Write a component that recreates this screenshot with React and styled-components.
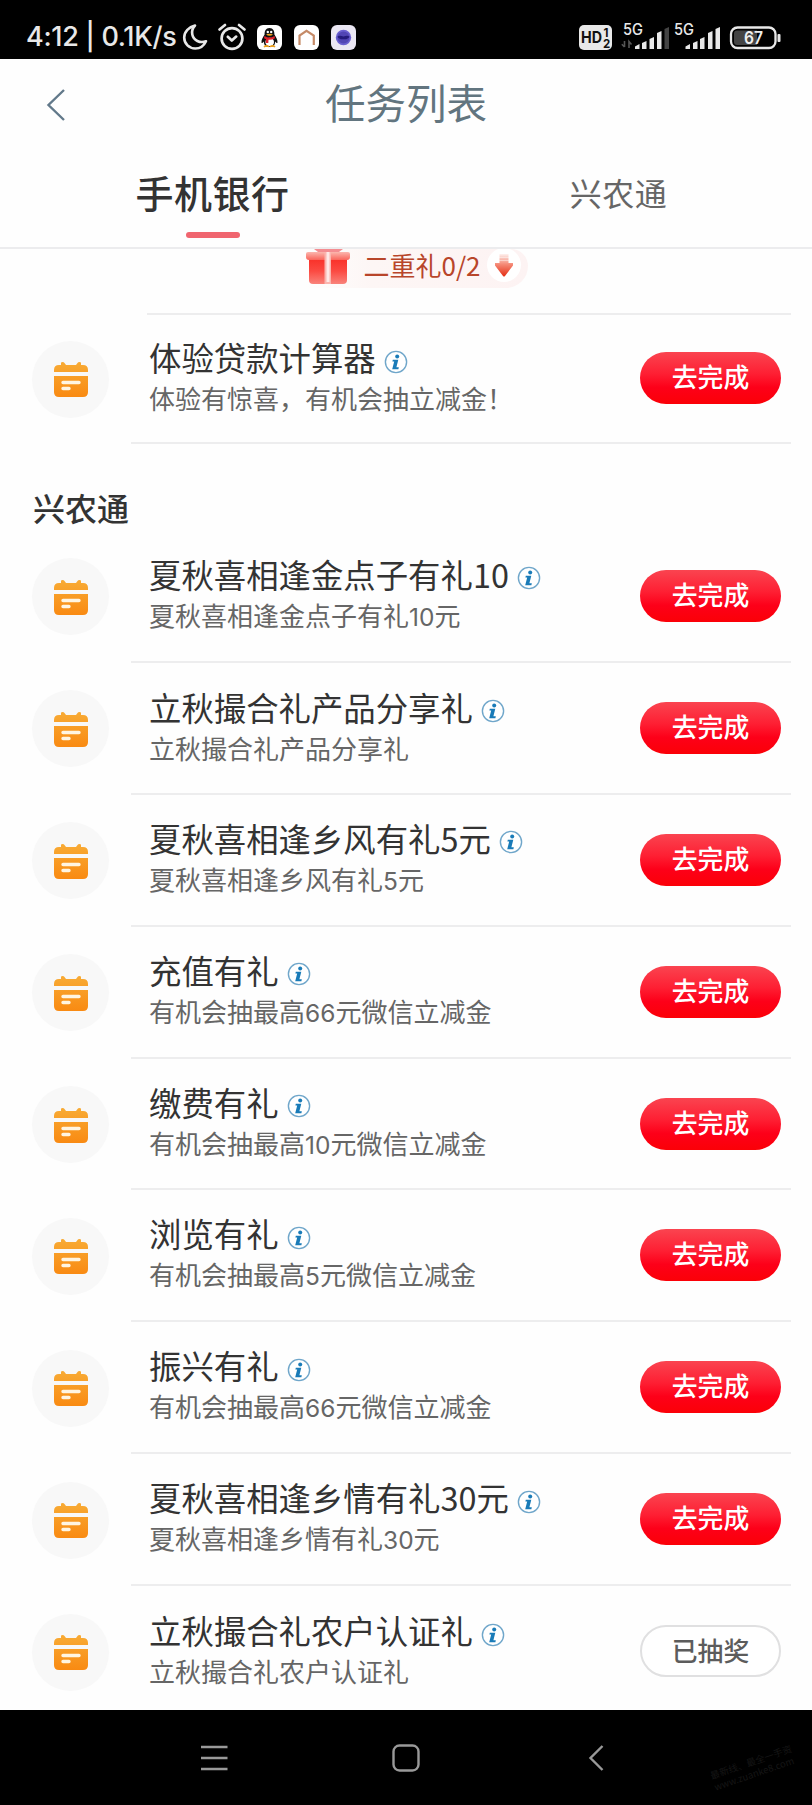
import styled, { createGlobalStyle } from 'styled-components';

const GlobalStyle = createGlobalStyle`
  * {
    box-sizing: border-box;
  }

  body {
    margin: 0;
    background: #fff;
    font-family: 'Noto Sans CJK SC', 'Noto Sans', sans-serif;
  }
`;

const Screen = styled.div`
  width: 812px;
  height: 1805px;
  display: flex;
  flex-direction: column;
  background: #fefefe;
  overflow: hidden;
`;

/* Status bar */
const StatusBar = styled.div`
  height: 59px;
  flex: none;
  display: flex;
  justify-content: space-between;
  padding: 16px 30px 0 26px;
  background: #000;
  color: #e8e8e8;
`;

const StatusSide = styled.div`
  display: flex;
  align-items: center;
  height: 42px;
`;

const Clock = styled.span`
  width: 156px;
  font-family: Inter, sans-serif;
  font-size: 27px;
  font-weight: 500;
  line-height: 42px;
  white-space: nowrap;
  letter-spacing: -0.3px;
`;

const StatusIcons = styled.div`
  display: flex;
  align-items: center;
  gap: 12px;

  svg:first-child {
    margin-right: -3px;
  }

  svg:nth-child(2) {
    margin-right: -2px;
  }
`;

/* Page header */
const Header = styled.header`
  height: 91px;
  flex: none;
  display: grid;
  grid-template-columns: 112px 1fr 112px;
  align-items: center;
`;

const BackButton = styled.button`
  height: 40px;
  margin-top: 3px;
  padding: 0 0 0 44px;
  border: 0;
  background: none;
  text-align: left;
`;

const PageTitle = styled.h1`
  margin: 0 0 6px;
  color: #62757f;
  font-size: 40.5px;
  font-weight: 400;
  line-height: 60px;
  text-align: center;
`;

const Tabs = styled.nav`
  height: 99px;
  flex: none;
  display: flex;
  border-bottom: 2px solid #ececee;
`;

const Tab = styled.div`
  flex: 1;
  display: flex;
  flex-direction: column;
  align-items: center;
  padding: 12px 0 0 ${props => (props.$active ? '19px' : '0')};
  color: ${props => (props.$active ? '#333' : '#666')};
  font-size: ${props => (props.$active ? '38px' : '32px')};
  font-weight: ${props => (props.$active ? 500 : 400)};
  line-height: 60px;
  letter-spacing: 0.5px;

  &:last-child {
    padding-right: 0;
    padding-left: 19px;
  }
`;

const TabMark = styled.i`
  width: 54px;
  height: 6px;
  margin-top: 10px;
  border-radius: 3px;
  background: #f0656f;
`;

/* Everything between the tabs and the system navigation, cut at both ends */
const Content = styled.main`
  flex: 1;
  min-height: 0;
  display: flex;
  flex-direction: column;
  overflow: hidden;
`;

/* Gift progress strip */
const GiftStrip = styled.div`
  height: 64.5px;
  flex: none;
  display: flex;
  justify-content: center;
  padding-left: 20px;
`;

const GiftPill = styled.div`
  width: 223px;
  height: 39px;
  display: flex;
  align-items: center;
  border-radius: 0 17px 22px 0;
  background: linear-gradient(90deg, #fefefe, #fdf6f5 30%, #fdf3f3);
  color: #b8452a;
  font-size: 26px;
`;

const GiftText = styled.span`
  width: 120px;
  margin: -8px 0 0 13px;
  line-height: 30px;
  white-space: nowrap;
`;

const ArrowDisc = styled.span`
  width: 34px;
  height: 34px;
  display: grid;
  place-items: center;
  margin: -7px 0 0 3px;
  border-radius: 50%;
  background: #fff;
`;

/* Task list */
const Row = styled.div`
  height: ${props => props.$height || '131.9px'};
  flex: none;
  display: flex;
  align-items: center;
  padding: 0 31px 0 32px;
`;

const Divider = styled.div`
  height: 2px;
  flex: none;
  margin: -1px 21px -1px ${props => props.$inset || '131px'};
  background: #ededee;
`;

const IconDisc = styled.div`
  width: 77px;
  height: 77px;
  flex: none;
  display: grid;
  place-items: center;
  margin-top: 2px;
  padding-top: 1px;
  border-radius: 50%;
  background: #f8f8f8;
`;

const TaskText = styled.div`
  flex: 1;
  margin-top: -5px;
  padding-left: 40px;
  white-space: nowrap;
`;

const TaskTitle = styled.div`
  display: flex;
  align-items: center;
  gap: 8px;
  color: #333;
  font-size: 32.4px;
  line-height: 44px;

  svg {
    margin-top: 9px;
  }
`;

const TaskNote = styled.div`
  margin-top: 1px;
  color: #666;
  font-size: 26px;
  line-height: 36px;
`;

const Digits = styled.span`
  font-family: Inter, sans-serif;
  font-size: 24.5px;
`;

const ActionButton = styled.button`
  width: 141px;
  height: 52px;
  flex: none;
  padding: 0 0 4px;
  border: ${props => (props.$done ? '2px solid #e0e0e1' : '0')};
  border-radius: 26px;
  background: ${props =>
    props.$done ? '#fff' : 'linear-gradient(180deg, #fa4450 0%, #fe1f33 42%, #fd0019 68%, #fb0007 100%)'};
  color: ${props => (props.$done ? '#5c5c5c' : '#fff')};
  font-family: inherit;
  font-size: 25.8px;
  font-weight: 500;
  line-height: 46px;
`;

const SectionTitle = styled.h2`
  height: 87.5px;
  flex: none;
  margin: 0;
  padding: 42px 0 0 33px;
  color: #333;
  font-size: 32px;
  font-weight: 500;
  line-height: 44px;
`;

/* System navigation */
const NavBar = styled.footer`
  height: 95px;
  flex: none;
  display: grid;
  grid-template-columns: 310px 191px 189px 122px;
  align-items: center;
  background: #000;
`;

const NavKey = styled.span`
  display: flex;
  justify-content: ${props => props.$align || 'center'};
  padding-left: ${props => props.$indent || '0'};
`;

const Watermark = styled.div`
  width: 88px;
  margin: 18px 0 0 20px;
  color: #151515;
  font-size: 9.5px;
  line-height: 12px;
  white-space: nowrap;
  transform: rotate(-19deg);
`;

const MoonIcon = () => (
  <svg width="26" height="28" viewBox="0 0 26 28">
    <path
      d="M13 2.5C7 4 2.2 8.5 2.2 14.5C2.2 21 7.2 25.5 13.3 25.5C18 25.5 22 22.5 24 18.2C18 20.5 11.5 17.5 10.3 11.5C9.6 8.2 10.8 4.8 13 2.5Z"
      fill="none"
      stroke="#e8e8e8"
      strokeWidth="2.6"
      strokeLinejoin="round"
    />
  </svg>
);

const AlarmIcon = () => (
  <svg width="30" height="28" viewBox="0 0 30 28">
    <g fill="none" stroke="#e8e8e8" strokeWidth="2.7" strokeLinecap="round" strokeLinejoin="round">
      <circle cx="15" cy="15.5" r="10.4" />
      <path d="M2.5 6.5L8 2M27.5 6.5L22 2M10.8 13.8L14.8 17.5L19.2 13.6" />
    </g>
  </svg>
);

const PenguinIcon = () => (
  <svg width="25" height="25" viewBox="0 0 25 25">
    <rect width="25" height="25" rx="6" fill="#fff" />
    <path
      d="M12.5 3C8.8 3 7.5 6 7.6 9.5C6 12 4.2 15 4.5 17.5C4.8 18.8 6 17.5 6.8 16.5C7 21 9.5 22 12.5 22S18 21 18.2 16.5C19 17.5 20.2 18.8 20.5 17.5C20.8 15 19 12 17.4 9.5C17.5 6 16.2 3 12.5 3Z"
      fill="#111"
    />
    <ellipse cx="12.7" cy="17" rx="4.3" ry="4.3" fill="#fff" />
    <circle cx="10.8" cy="7" r="1.2" fill="#fff" />
    <circle cx="14.2" cy="7" r="1.2" fill="#fff" />
    <path d="M9 9.5Q12.5 8 16 9.5Q12.5 12 9 9.5Z" fill="#f3a51c" />
    <path d="M7.5 11Q12.5 14 17.5 11L18 13.2Q15 15 11.5 14.7L11.3 18H8.8L9 14.2L7 13.3Z" fill="#e0202b" />
    <path d="M7 22Q9 20 12 21.6M13 21.6Q16 20 18 22" fill="none" stroke="#efa119" strokeWidth="1.5" />
  </svg>
);

const HomeAppIcon = () => (
  <svg width="25" height="25" viewBox="0 0 25 25">
    <rect width="25" height="25" rx="6" fill="#fff" />
    <path d="M5.5 20V10.5L12.5 5.8L19.8 10.5V20" fill="none" stroke="#c58a67" strokeWidth="2.2" />
  </svg>
);

const OrbAppIcon = () => (
  <svg width="25" height="25" viewBox="0 0 25 25">
    <rect width="25" height="25" rx="6" fill="#ebe7f3" />
    <circle cx="12.5" cy="12.5" r="7.7" fill="#6a5fd0" />
    <circle cx="12.5" cy="12.5" r="6" fill="#5145b4" />
    <path d="M6.5 11.5Q9 10.2 12.5 11.6Q16 10.2 18.5 11.5Q17.5 14.5 12.5 14.3Q7.5 14.5 6.5 11.5Z" fill="#251b7c" />
  </svg>
);

const SignalIcons = () => (
  <svg width="204" height="38" viewBox="0 -4 204 38">
    <rect x="1" y="3" width="33" height="25" rx="5" fill="#e8e8e8" />
    <g fontFamily="Inter, sans-serif" fontWeight="700" fill="#111">
      <text x="3" y="20.5" fontSize="15.5" textLength="21" lengthAdjust="spacingAndGlyphs">HD</text>
      <text x="25.5" y="14.5" fontSize="11.5">1</text>
      <text x="25" y="26" fontSize="11.5">2</text>
    </g>
    <g fontFamily="Inter, sans-serif" fontWeight="500" fontSize="15.5" fill="#e8e8e8">
      <text x="45" y="13.3" textLength="20" lengthAdjust="spacingAndGlyphs">5G</text>
      <text x="96" y="13.3" textLength="20" lengthAdjust="spacingAndGlyphs">5G</text>
    </g>
    <path d="M46.5 19V25M46.5 25L43.8 22.3M51 26V19.5L53.5 22.5" fill="none" stroke="#555" strokeWidth="1.6" />
    <g fill="#e8e8e8">
      <path d="M57 27V24.5L61.5 22V27ZM64 27V21L68.5 19V27ZM71.5 27V17L76 15V27ZM79 27V11L83.5 9V27Z" />
      <path d="M107.5 27V24.5L112 22V27ZM115 27V21L119.5 19V27ZM122 27V17L126.5 15V27ZM130 27V11L134.5 9V27ZM137.5 27V7L142 5V27Z" />
    </g>
    <path d="M86.5 27V7L91 5V27Z" fill="#444" />
    <rect x="153" y="5.5" width="44.5" height="20.5" rx="6.5" fill="#000" stroke="#e8e8e8" strokeWidth="2.3" />
    <path d="M159 8.5H179V23H159Q156 23 156 20V11.5Q156 8.5 159 8.5Z" fill="#444" />
    <rect x="199.5" y="12" width="3" height="8" rx="1" fill="#e8e8e8" />
    <text x="175.5" y="21.8" textAnchor="middle" fontFamily="Inter, sans-serif" fontWeight="600" fontSize="17" textLength="19" lengthAdjust="spacingAndGlyphs" fill="#eee">67</text>
  </svg>
);

const GiftIcon = () => (
  <svg width="46" height="40" viewBox="0 0 46 40">
    <defs>
      <linearGradient id="giftBody" x2="0" y2="1">
        <stop offset="0" stopColor="#f92f27" />
        <stop offset="0.5" stopColor="#fb4a42" />
        <stop offset="1" stopColor="#f9837b" />
      </linearGradient>
      <linearGradient id="giftLid" x2="0" y2="1">
        <stop offset="0" stopColor="#fbb6ae" />
        <stop offset="1" stopColor="#fa655b" />
      </linearGradient>
    </defs>
    <path d="M9 0H38L34 3H13Z" fill="#f48d91" />
    <path d="M4 9H42V31Q42 35 38 35H8Q4 35 4 31Z" fill="url(#giftBody)" />
    <path d="M1 5Q1 3 3 3H43Q45 3 45 5V8Q45 11 42 11H4Q1 11 1 8Z" fill="url(#giftLid)" />
    <path d="M19.5 3H26V35H19.5Z" fill="#fbb5af" />
    <path d="M21.5 3H24.5V33H21.5Z" fill="#fff" opacity="0.7" />
  </svg>
);

const ArrowIcon = () => (
  <svg width="20" height="26" viewBox="0 0 20 26">
    <defs>
      <linearGradient id="arrowFill" x2="0" y2="1">
        <stop offset="0" stopColor="#fef1ee" />
        <stop offset="0.45" stopColor="#f58b78" />
        <stop offset="1" stopColor="#e42d12" />
      </linearGradient>
    </defs>
    <path d="M5.5 2H14.5V11H19V13.5L11 24Q10 25 9 24L1 13.5V11H5.5Z" fill="url(#arrowFill)" />
    <path d="M4 5.5H16M4 8.5H16" stroke="#fff" strokeWidth="0.7" opacity="0.6" />
  </svg>
);

const CalendarIcon = () => (
  <svg width="36" height="37" viewBox="0 0 36 37">
    <defs>
      <linearGradient id="calendarFill" gradientUnits="userSpaceOnUse" x1="0" y1="0" x2="0" y2="36">
        <stop offset="0" stopColor="#f8ac36" />
        <stop offset="1" stopColor="#f98a12" />
      </linearGradient>
    </defs>
    <g fill="url(#calendarFill)">
      <path d="M1 11V9Q1 4 6 4H8V2Q8 1 9.5 1T11.5 2L13 4H23L24.5 2Q25 1 26.5 1T28 2V4H30Q35 4 35 9V11Z" />
      <path d="M1 15H35V31Q35 36 30 36H6Q1 36 1 31Z" />
    </g>
    <path d="M10 21.5H26M10 27.5H16" stroke="#fff5e2" strokeWidth="3.4" strokeLinecap="round" />
  </svg>
);

const InfoIcon = () => (
  <svg width="24" height="24" viewBox="0 0 24 24">
    <circle cx="12" cy="12" r="10.6" fill="#fff" stroke="#6fa6ca" strokeWidth="1.4" />
    <circle cx="13.2" cy="6.6" r="2" fill="#197bb8" />
    <path d="M8.8 9.8H14.3L12.4 17.2H14.8L14.4 19.2H8.2L10.2 11.4H8.4Z" fill="#197bb8" />
  </svg>
);

const tasks = [
  { title: '夏秋喜相逢金点子有礼10', note: '夏秋喜相逢金点子有礼10元' },
  { title: '立秋撮合礼产品分享礼', note: '立秋撮合礼产品分享礼' },
  { title: '夏秋喜相逢乡风有礼5元', note: '夏秋喜相逢乡风有礼5元' },
  { title: '充值有礼', note: '有机会抽最高66元微信立减金' },
  { title: '缴费有礼', note: '有机会抽最高10元微信立减金' },
  { title: '浏览有礼', note: '有机会抽最高5元微信立减金' },
  { title: '振兴有礼', note: '有机会抽最高66元微信立减金' },
  { title: '夏秋喜相逢乡情有礼30元', note: '夏秋喜相逢乡情有礼30元' },
  { title: '立秋撮合礼农户认证礼', note: '立秋撮合礼农户认证礼', done: true },
];

const Task = ({ task, height, last }) => (
  <>
    <Row $height={height}>
      <IconDisc>
        <CalendarIcon />
      </IconDisc>
      <TaskText>
        <TaskTitle>
          {task.title}
          <InfoIcon />
        </TaskTitle>
        <TaskNote>
          {task.note.split(/(\d+)/).map((part, index) => (
            index % 2 ? <Digits key={index}>{part}</Digits> : part
          ))}
        </TaskNote>
      </TaskText>
      <ActionButton $done={task.done}>{task.done ? '已抽奖' : '去完成'}</ActionButton>
    </Row>
    {!last && <Divider />}
  </>
);

export default function App() {
  return (
    <Screen>
      <GlobalStyle />
      <StatusBar>
        <StatusSide>
          <Clock>4:12 | 0.1K/s</Clock>
          <StatusIcons>
            <MoonIcon />
            <AlarmIcon />
            <PenguinIcon />
            <HomeAppIcon />
            <OrbAppIcon />
          </StatusIcons>
        </StatusSide>
        <StatusSide>
          <SignalIcons />
        </StatusSide>
      </StatusBar>
      <Header>
        <BackButton aria-label="返回">
          <svg width="22" height="34" viewBox="0 0 22 34">
            <path d="M20 2L4.5 17L20 32" fill="none" stroke="#62798a" strokeWidth="2.4" />
          </svg>
        </BackButton>
        <PageTitle>任务列表</PageTitle>
      </Header>
      <Tabs>
        <Tab $active>
          手机银行
          <TabMark />
        </Tab>
        <Tab>兴农通</Tab>
      </Tabs>
      <Content>
        <GiftStrip>
          <GiftPill>
            <GiftIcon />
            <GiftText>二重礼0/2</GiftText>
            <ArrowDisc>
              <ArrowIcon />
            </ArrowDisc>
          </GiftPill>
        </GiftStrip>
        <Divider $inset="147px" />
        <Task task={{ title: '体验贷款计算器', note: '体验有惊喜，有机会抽立减金！' }} height="129px" />
        <SectionTitle>兴农通</SectionTitle>
        {tasks.map((task, index) => (
          <Task key={task.title} task={task} last={index === tasks.length - 1} />
        ))}
      </Content>
      <NavBar>
        <NavKey $align="flex-start" $indent="200px">
          <svg width="28" height="26" viewBox="0 0 28 26">
            <path d="M1 2H27.5M1 13H27.5M1 24H27.5" stroke="#999" strokeWidth="2.4" />
          </svg>
        </NavKey>
        <NavKey>
          <svg width="28" height="28" viewBox="0 0 28 28">
            <rect x="1.5" y="1.5" width="25" height="25" rx="6" fill="none" stroke="#999" strokeWidth="2.4" />
          </svg>
        </NavKey>
        <NavKey>
          <svg width="16" height="28" viewBox="0 0 16 28">
            <path d="M14.5 2L2.5 14L14.5 26" fill="none" stroke="#999" strokeWidth="2.4" />
          </svg>
        </NavKey>
        <Watermark>
          最新线、最全一手资
          <br />
          www.zuanke8.com
        </Watermark>
      </NavBar>
    </Screen>
  );
}
